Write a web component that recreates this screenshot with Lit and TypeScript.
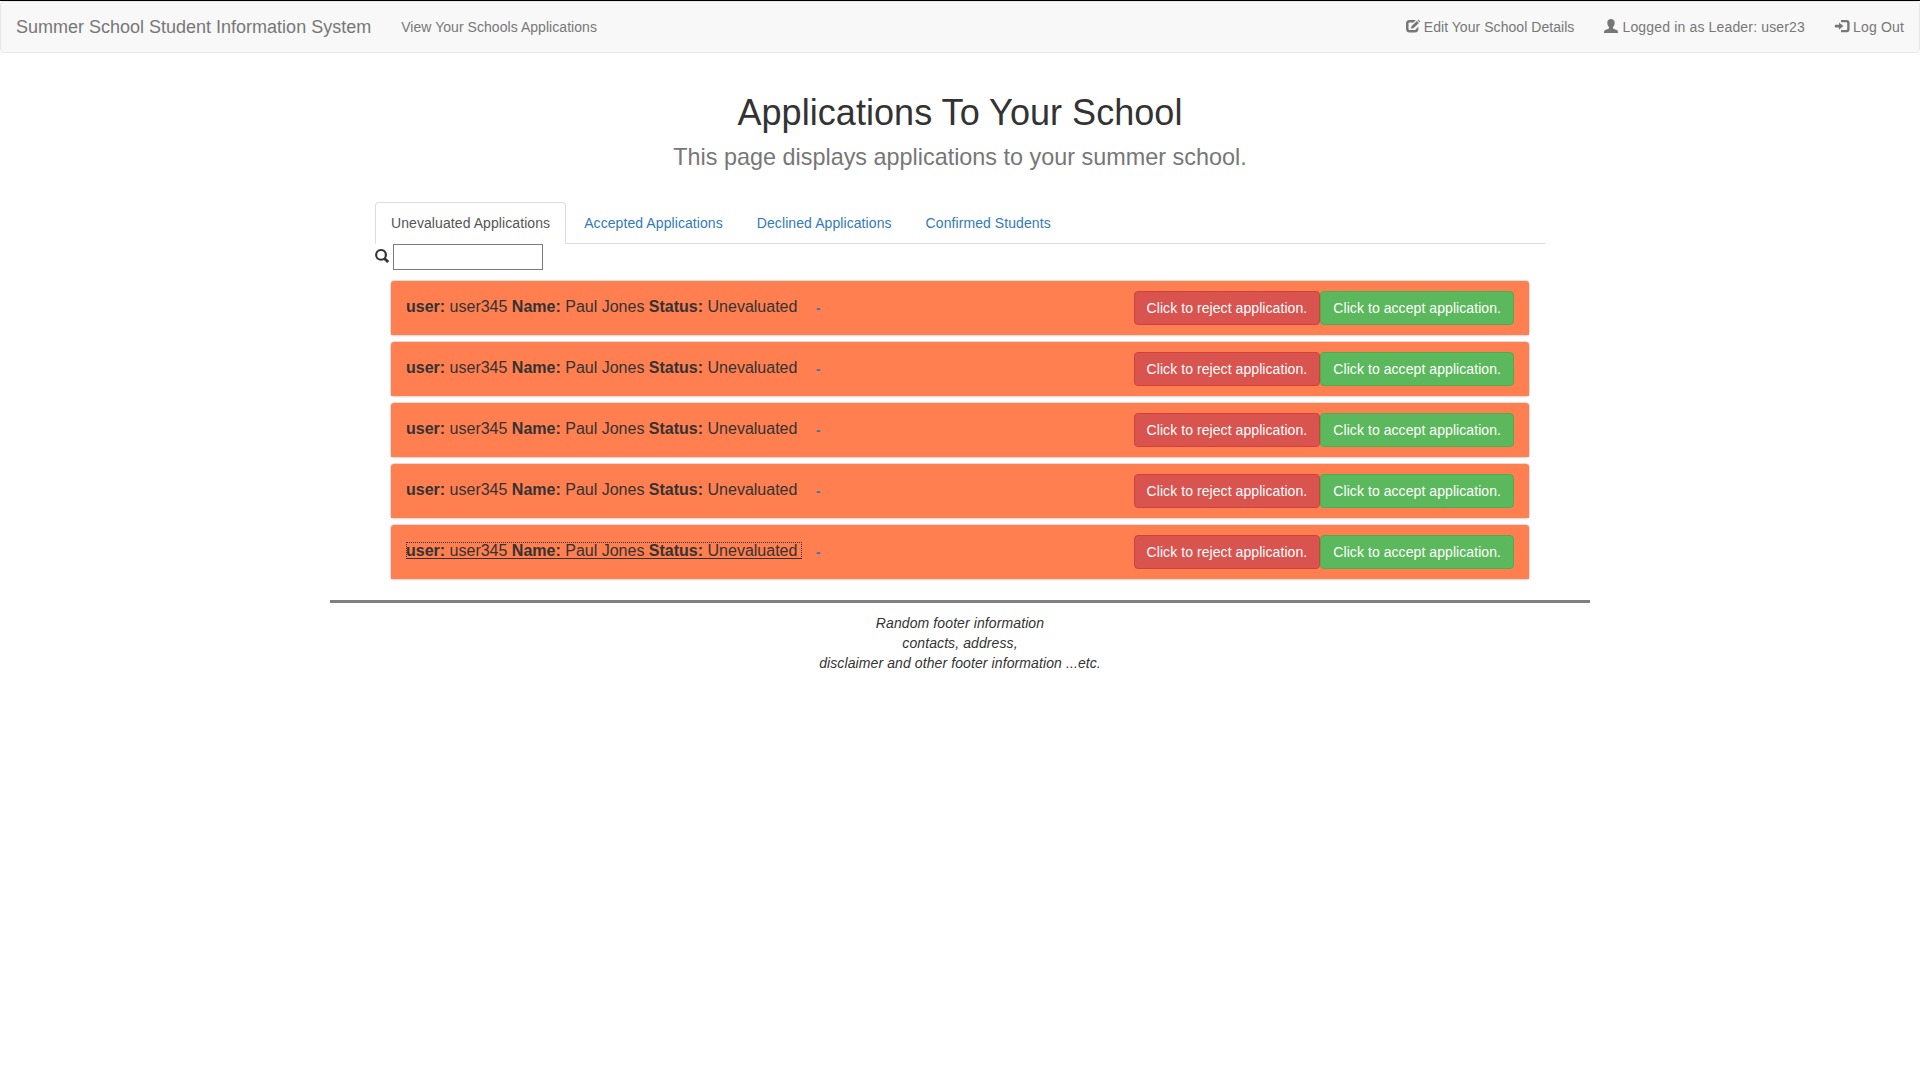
import { LitElement, html, css, svg } from "lit";
import { customElement, property, state } from "lit/decorators.js";

const ICONS: Record<string, unknown> = {
  edit: svg`<path d="M9.800 1H3.600Q0 1 0 4.600v5.200Q0 13.400 3.600 13.400h5.200Q12.400 13.400 12.400 9.800V7.800L10 10V10Q10 11 9 11H3.700Q2.500 11 2.500 9.800V4.600Q2.500 3.400 3.700 3.400H7.600z"/><path d="M4.800 9.800 5.700 7 10.900 1.900 12.900 3.900 7.700 8.900zM11.600 1.300 12.500.5 14.300 2.400 13.500 3.200z"/>`,
  user: svg`<path d="M7 0C9.200 0 10.700 1.300 10.700 3.700 10.700 5.500 10 7 9 7.900V9.200C9 9.800 12.300 10.500 13.200 11.300 13.800 11.800 14 12.700 14 14H0C0 12.700.2 11.800.8 11.300 1.700 10.500 5 9.800 5 9.200V7.900C4 7 3.300 5.500 3.300 3.700 3.300 1.300 4.800 0 7 0z"/>`,
  login: svg`<path d="M4 3.400 8.400 7.100 4 10.800V8.500H.6Q-.2 8.500-.2 7.700V6.500Q-.2 5.700.6 5.700H4zM6 1H11.600Q14.600 1 14.600 4V10.200Q14.600 13.200 11.600 13.200H6V10.900H11.200Q12.200 10.900 12.200 9.900V4.300Q12.200 3.300 11.200 3.300H6z"/>`,
  search: svg`<path fill-rule="evenodd" d="M6 0a5.900 5.900 0 0 1 5 9.100L14.200 12.100 12.200 14.100 9 11A5.900 5.900 0 1 1 6 0zM6 2.100a3.800 3.800 0 1 0 0 7.600 3.800 3.800 0 0 0 0-7.600z"/>`,
};

@customElement("glyph-icon")
class GlyphIcon extends LitElement {
  static styles = css`
    :host { display: inline-block; position: relative; top: 1px; width: 14px; height: 14px; line-height: 1; letter-spacing: 0; }
    .glyph { display: block; width: 14px; height: 14px; fill: currentColor; overflow: visible; }
  `;
  @property() name = "";
  render() {
    return html`<svg class="glyph" viewBox="0 0 14 14">${ICONS[this.name]}</svg>`;
  }
}

interface Application { user: string; name: string; status: string; focused?: boolean; }

@customElement("application-row")
class ApplicationRow extends LitElement {
  static styles = css`
    :host { display: block; }
    .panel { box-sizing: border-box; height: 56px; border: 1px solid #ddd; border-radius: 4px; background: #fff; box-shadow: 0 1px 1px rgba(0, 0, 0, 0.05); }
    .heading { box-sizing: border-box; height: 54px; padding: 10px 15px; display: flex; align-items: flex-start; background: #ff7f50; border-radius: 3px 3px 0 0; }
    .title { height: 16px; margin-top: 7px; font-size: 16px; line-height: 17px; white-space: pre; color: #333; border-bottom: 1px solid transparent; }
    .title.focused { outline: 1px dotted #333; outline-offset: -1px; border-bottom-color: #333; }
    .toggle { margin: 7px 0 0 14px; line-height: 20px; font-weight: 700; color: #337ab7; text-decoration: none; }
    .actions { display: flex; margin-left: auto; }
    .btn { box-sizing: border-box; height: 34px; padding: 6px 12px; font: inherit; line-height: 20px; letter-spacing: 0.07px; color: #fff; border: 1px solid; border-radius: 4px; cursor: pointer; }
    .reject { background: #d9534f; border-color: #d43f3a; }
    .accept { background: #5cb85c; border-color: #4cae4c; }
  `;
  @property({ attribute: false }) item!: Application;
  render() {
    const a = this.item;
    return html`<div class="panel"><div class="heading">
      <div class="title ${a.focused ? "focused" : ""}"><b>user:</b> ${a.user} <b>Name:</b> ${a.name} <b>Status:</b> ${a.status} </div>
      <a class="toggle" href="#">-</a>
      <div class="actions">
        <button class="btn reject">Click to reject application.</button>
        <button class="btn accept">Click to accept application.</button>
      </div>
    </div></div>`;
  }
}

@customElement("app-root")
class AppRoot extends LitElement {
  static styles = css`
    :host { display: block; min-height: 100vh; box-sizing: border-box; border-top: 1px solid #000; background: #fff; font: 14px/20px "Liberation Sans", Arial, sans-serif; color: #333; }
    .navbar { box-sizing: border-box; height: 52px; display: flex; background: #f8f8f8; border: 1px solid #e7e7e7; border-radius: 4px; }
    .brand { padding: 15px; font-size: 18px; color: #777; text-decoration: none; }
    .link { padding: 15px; color: #777; text-decoration: none; letter-spacing: 0.05px; }
    .link.wide { letter-spacing: 0.16px; }
    .right { display: flex; margin-left: auto; }
    .header { text-align: center; padding-top: 40px; }
    .heading { margin: 0; font-size: 36px; line-height: 40px; font-weight: 400; letter-spacing: 0.05px; }
    .sub { margin: 11px 0 0; font-size: 23.400px; line-height: 26px; color: #777; }
    .container { width: 1170px; margin: 32px auto 0; }
    .tabs { display: flex; gap: 2px; height: 41px; border-bottom: 1px solid #ddd; }
    .tab { box-sizing: border-box; height: 42px; padding: 10px 15px; border: 1px solid transparent; border-radius: 4px 4px 0 0; color: #337ab7; text-decoration: none; letter-spacing: 0.08px; }
    .tab.active { color: #555; background: #fff; border-color: #ddd; border-bottom-color: #fff; }
    .search { display: flex; align-items: center; gap: 4px; height: 26px; }
    .search glyph-icon { top: -1px; }
    .field { box-sizing: border-box; width: 150px; height: 26px; border: 1px solid #7a7a7a; padding: 1px 3px; font: inherit; background: #fff; }
    .list { display: flex; flex-direction: column; gap: 5px; padding: 10px 15px 0; }
    .footer { width: 1260px; margin: 20px auto 0; border-top: 3px solid #808080; padding-top: 10px; text-align: center; font-style: italic; letter-spacing: 0.1px; }
  `;
  @state() private tab = 0;
  private tabs = ["Unevaluated Applications", "Accepted Applications", "Declined Applications", "Confirmed Students"];
  private items: Application[] = Array.from({ length: 5 }, (_, i) => ({
    user: "user345", name: "Paul Jones", status: "Unevaluated", focused: i === 4,
  }));
  private select(e: Event, i: number) {
    e.preventDefault();
    this.tab = i;
  }
  render() {
    return html`
      <nav class="navbar">
        <a class="brand" href="#">Summer School Student Information System</a>
        <a class="link" href="#">View Your Schools Applications</a>
        <div class="right">
          <a class="link" href="#"><glyph-icon name="edit"></glyph-icon> Edit Your School Details</a>
          <a class="link wide" href="#"><glyph-icon name="user"></glyph-icon> Logged in as Leader: user23</a>
          <a class="link wide" href="#"><glyph-icon name="login"></glyph-icon> Log Out</a>
        </div>
      </nav>
      <header class="header">
        <h1 class="heading">Applications To Your School</h1>
        <p class="sub">This page displays applications to your summer school.</p>
      </header>
      <main class="container">
        <div class="tabs">${this.tabs.map((t, i) => html`<a class="tab ${i === this.tab ? "active" : ""}" href="#" @click=${(e: Event) => this.select(e, i)}>${t}</a>`)}</div>
        <div class="search"><glyph-icon name="search"></glyph-icon><input class="field" type="text" /></div>
        <div class="list">${this.items.map((a) => html`<application-row .item=${a}></application-row>`)}</div>
      </main>
      <footer class="footer">Random footer information<br />contacts, address,<br />disclaimer and other footer information ...etc.</footer>
    `;
  }
}
